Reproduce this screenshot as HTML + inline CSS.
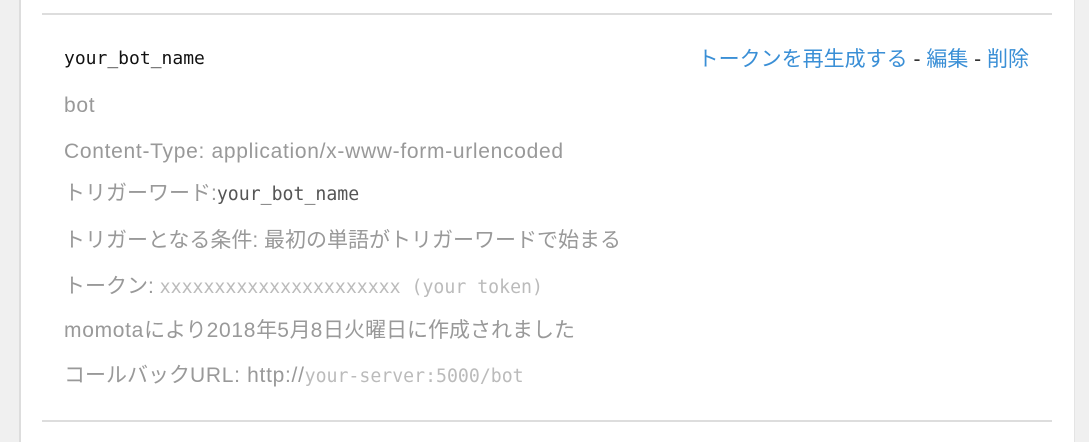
<!DOCTYPE html>
<html><head><meta charset="utf-8"><style>
html,body{margin:0;padding:0;width:1089px;height:442px;overflow:hidden;background:#f0f0f0;}
.panel{position:absolute;left:19px;top:0;width:1053px;height:442px;background:#fff;border-left:2px solid #ddd;border-right:1px solid #e4e4e4;}
.hr{position:absolute;left:42px;width:1010px;height:2px;background:#ddd;}
.l{position:absolute;left:64px;font-family:"Liberation Sans","Noto Sans CJK JP",sans-serif;font-size:21px;color:#999;white-space:nowrap;line-height:26px;}
.la{letter-spacing:0.7px;}
.m{font-family:"DejaVu Sans Mono","Liberation Mono",monospace;font-size:18.2px;letter-spacing:0;}
.r{position:absolute;right:60px;top:47px;font-family:"Liberation Sans","Noto Sans CJK JP",sans-serif;font-size:21px;color:#333;line-height:26px;}
.r a{color:#3a8fd6;text-decoration:none;}
</style></head><body>
<div class="panel"></div>
<div class="hr" style="top:13px"></div>
<div class="hr" style="top:420px"></div>
<div class="l m" style="top:46px;color:#111;font-size:18px">your_bot_name</div>
<div class="r"><a>トークンを再生成する</a> - <a>編集</a> - <a>削除</a></div>
<div class="l la" style="top:93px">bot</div>
<div class="l la" style="top:139px">Content-Type: application/x-www-form-urlencoded</div>
<div class="l" style="top:181px">トリガーワード:<span class="m" style="color:#555">your_bot_name</span></div>
<div class="l" style="top:228px">トリガーとなる条件: 最初の単語がトリガーワードで始まる</div>
<div class="l" style="top:274px">トークン: <span class="m" style="color:#bbb">xxxxxxxxxxxxxxxxxxxxxx (your token)</span></div>
<div class="l" style="top:318px"><span class="la">momota</span>により<span class="la">2018</span>年<span class="la">5</span>月<span class="la">8</span>日火曜日に作成されました</div>
<div class="l" style="top:363px">コールバック<span class="la">URL: http://</span><span class="m" style="color:#bbb">your-server:5000/bot</span></div>
</body></html>
